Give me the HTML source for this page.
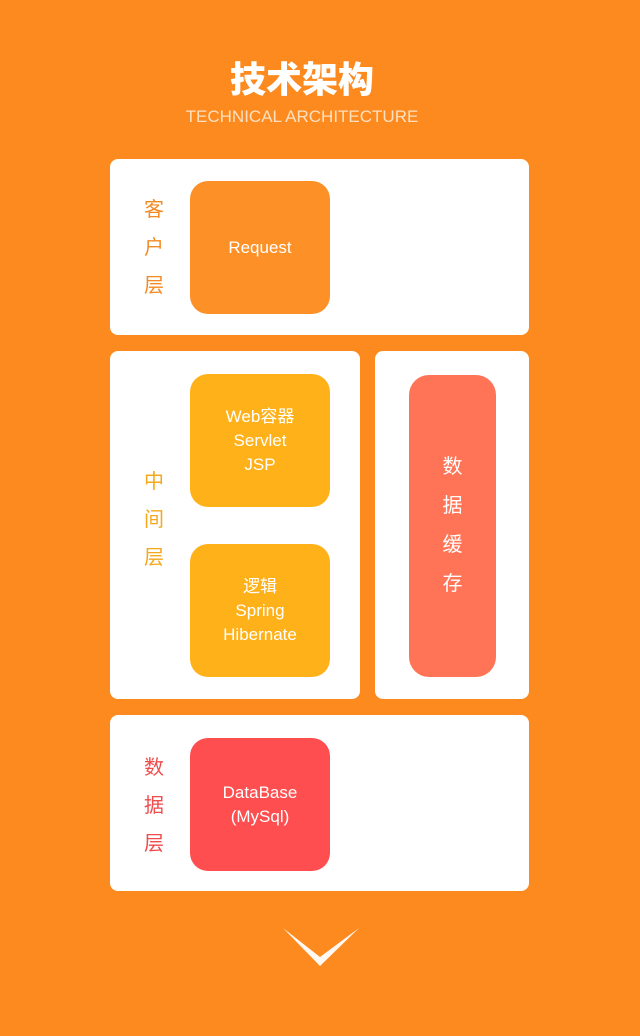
<!DOCTYPE html>
<html><head><meta charset="utf-8"><style>
body{margin:0;width:640px;height:1036px;background:#fd8a1f;position:relative;overflow:hidden;font-family:"Liberation Sans","Noto Sans CJK SC",sans-serif}
.a{position:absolute}
.card{position:absolute;background:#fff;border-radius:8px}
.box{position:absolute;border-radius:18px;color:#fff;font-size:17px;line-height:24px;display:flex;align-items:center;justify-content:center;text-align:center}
.lbl{position:absolute;font-size:20px;line-height:38px;width:30px;text-align:center}
</style></head><body>
<div class="a" style="left:0;width:604px;top:54px;text-align:center;color:#fff;font-size:36px;font-weight:900;letter-spacing:0px;font-family:'Noto Sans CJK SC',sans-serif;line-height:46px">技术架构</div>
<div class="a" style="left:0;width:604px;top:107px;text-align:center;color:#fde0c0;font-size:17px">TECHNICAL ARCHITECTURE</div>

<div class="card" style="left:110px;top:159px;width:419px;height:176px"></div>
<div class="lbl" style="left:139px;top:191px;color:#f38a24">客<br>户<br>层</div>
<div class="box" style="left:190px;top:181px;width:140px;height:133px;background:#fd9026">Request</div>

<div class="card" style="left:110px;top:351px;width:250px;height:348px"></div>
<div class="lbl" style="left:139px;top:463px;color:#f6a81c">中<br>间<br>层</div>
<div class="box" style="left:190px;top:374px;width:140px;height:133px;background:#ffb11a">Web容器<br>Servlet<br>JSP</div>
<div class="box" style="left:190px;top:544px;width:140px;height:133px;background:#ffb11a">逻辑<br>Spring<br>Hibernate</div>

<div class="card" style="left:375px;top:351px;width:154px;height:348px"></div>
<div class="box" style="left:409px;top:375px;width:87px;height:302px;border-radius:20px;background:#ff7456;font-size:20px;line-height:39px">数<br>据<br>缓<br>存</div>

<div class="card" style="left:110px;top:715px;width:419px;height:176px"></div>
<div class="lbl" style="left:139px;top:749px;color:#ef4c4c">数<br>据<br>层</div>
<div class="box" style="left:190px;top:738px;width:140px;height:133px;background:#fe4e4f">DataBase<br>(MySql)</div>

<svg class="a" style="left:280px;top:924px" width="82" height="46"><polygon points="3,4 40,42 79,4 40,33" fill="#fff" opacity="0.95"/></svg>
</body></html>
